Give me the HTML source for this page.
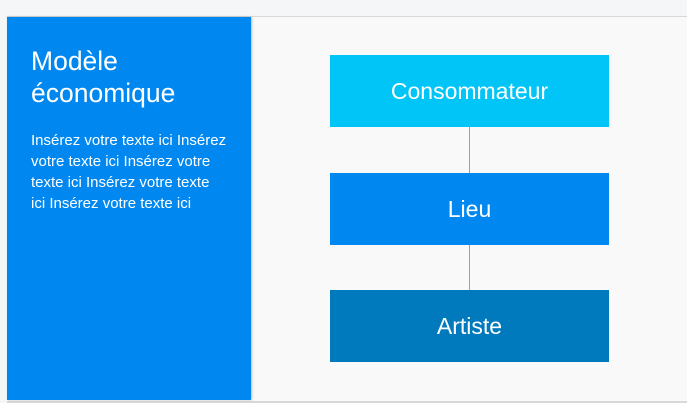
<!DOCTYPE html>
<html><head><style>
body{margin:0;width:687px;height:403px;background:#f5f6f8;font-family:"Liberation Sans",sans-serif;position:relative;overflow:hidden}
.card{position:absolute;left:7px;top:16px;width:680px;height:384px;background:#f9f9f9;border-top:1px solid #d8d8d8;border-bottom:2px solid #d8d8d8}
.blue{position:absolute;left:7px;top:17px;width:244px;height:383px;background:#0088f0;box-shadow:1px 0 2px rgba(0,0,0,.25)}
h1{position:absolute;left:24px;top:28px;margin:0;font-weight:normal;color:#fff;font-size:26.5px;line-height:32px}
p{position:absolute;left:24px;top:113px;margin:0;color:#fff;font-size:15px;line-height:21px;white-space:nowrap}
.b{position:absolute;left:330px;width:279px;height:72px;color:#fff;font-size:23px;display:flex;align-items:center;justify-content:center}
.l{position:absolute;left:469px;width:1px;background:#a0a0a0}
</style></head><body>
<div class="card"></div>
<div class="blue"><h1>Modèle<br>économique</h1><p>Insérez votre texte ici Insérez<br>votre texte ici Insérez votre<br>texte ici Insérez votre texte<br>ici Insérez votre texte ici</p></div>
<div class="l" style="top:127px;height:46px"></div>
<div class="l" style="top:244px;height:46px"></div>
<div class="b" style="top:55px;background:#00c5f6">Consommateur</div>
<div class="b" style="top:173px;background:#0088f0">Lieu</div>
<div class="b" style="top:290px;background:#0079bd">Artiste</div>
</body></html>
